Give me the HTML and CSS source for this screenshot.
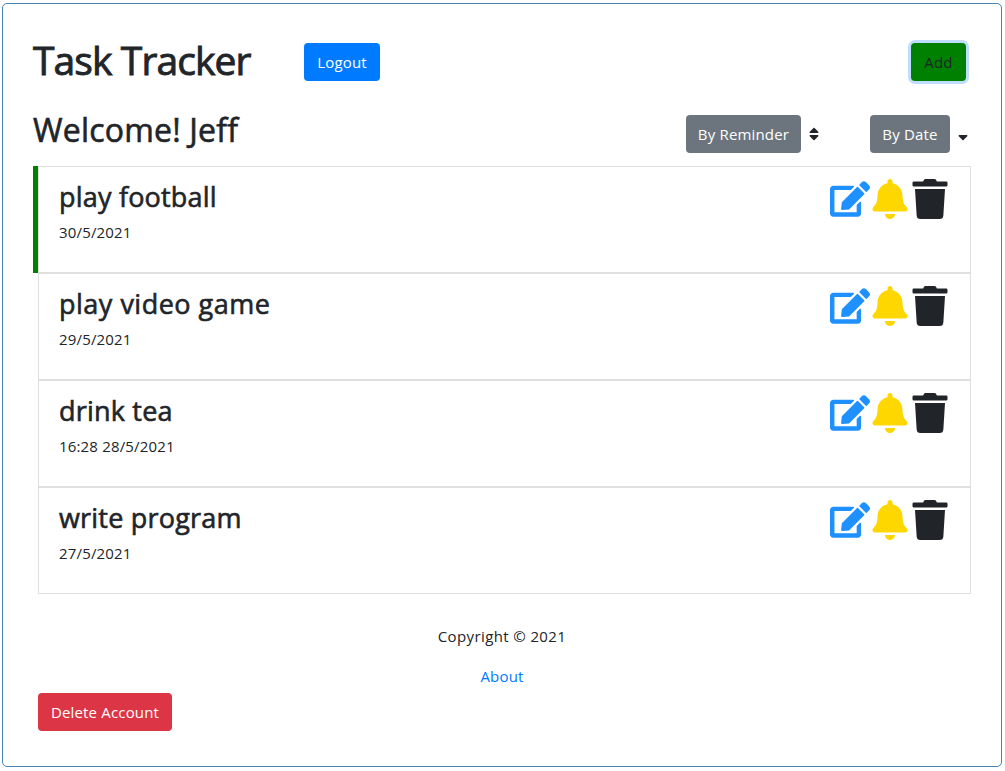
FILE: index.html
```
<!DOCTYPE html>
<html lang="en">
<head>
<meta charset="utf-8">
<title>Task Tracker</title>
<link rel="stylesheet" href="styles.css">
</head>
<body>
<svg class="sprite" aria-hidden="true">
  <symbol id="edit" viewBox="0 0 576 512"><path d="M402.6 83.2l90.2 90.2c3.8 3.8 3.8 10 0 13.8L274.4 405.6l-92.8 10.3c-12.4 1.4-22.9-9.1-21.5-21.5l10.3-92.8L388.8 83.2c3.8-3.8 10-3.8 13.8 0zm162-22.9l-48.8-48.8c-15.2-15.2-39.9-15.2-55.2 0l-35.4 35.4c-3.8 3.8-3.8 10 0 13.8l90.2 90.2c3.8 3.8 10 3.8 13.8 0l35.4-35.4c15.2-15.3 15.2-40 0-55.2zM384 346.2V448H64V128h229.8c3.2 0 6.200-1.300 8.500-3.500l40-40c7.600-7.600 2.200-20.500-8.500-20.500H48C21.500 64 0 85.500 0 112v352c0 26.500 21.500 48 48 48h352c26.500 0 48-21.500 48-48V306.200c0-10.700-12.900-16-20.500-8.500l-40 40c-2.200 2.300-3.500 5.300-3.500 8.500z"/></symbol>
  <symbol id="bell" viewBox="0 0 448 512"><path d="M224 512c35.320 0 63.970-28.650 63.970-64H160.030c0 35.350 28.650 64 63.970 64zm215.390-149.710c-19.320-20.760-55.470-51.990-55.470-154.290 0-77.700-54.480-139.900-127.940-155.160V32c0-17.670-14.320-32-31.980-32s-31.980 14.330-31.980 32v20.840C118.560 68.100 64.080 130.300 64.080 208c0 102.300-36.150 133.530-55.470 154.290-6 6.450-8.660 14.160-8.610 21.710.11 16.400 12.980 32 32.100 32h383.800c19.120 0 32-15.600 32.100-32 .05-7.550-2.610-15.270-8.610-21.710z"/></symbol>
  <symbol id="trash" viewBox="0 0 448 512"><path d="M432 32H312l-9.400-18.700A24 24 0 0 0 281.100 0H166.800a23.720 23.720 0 0 0-21.400 13.300L136 32H16A16 16 0 0 0 0 48v32a16 16 0 0 0 16 16h416a16 16 0 0 0 16-16V48a16 16 0 0 0-16-16zM53.200 467a48 48 0 0 0 47.900 45h245.800a48 48 0 0 0 47.900-45L416 128H32z"/></symbol>
  <symbol id="sort" viewBox="0 0 320 512"><path d="M41 288h238c21.400 0 32.100 25.900 17 41L177 448c-9.400 9.400-24.600 9.400-33.900 0L24 329c-15.100-15.100-4.400-41 17-41zm255-105L177 64c-9.400-9.400-24.600-9.400-33.900 0L24 183c-15.100 15.100-4.400 41 17 41h238c21.400 0 32.100-25.900 17-41z"/></symbol>
  <symbol id="sort-down" viewBox="0 0 320 512"><path d="M41 288h238c21.400 0 32.100 25.900 17 41L177 448c-9.400 9.400-24.600 9.400-33.900 0L24 329c-15.100-15.100-4.400-41 17-41z"/></symbol>
</svg>
<main class="container">
  <header class="header">
    <h1 class="title">Task Tracker</h1>
    <button class="btn btn-primary">Logout</button>
    <button class="btn btn-add">Add</button>
  </header>
  <section class="toolbar">
    <h2 class="welcome">Welcome! Jeff</h2>
    <button class="btn btn-secondary btn-reminder">By Reminder</button>
    <svg class="sort-icon"><use href="#sort"/></svg>
    <button class="btn btn-secondary btn-date">By Date</button>
    <svg class="sort-icon"><use href="#sort-down"/></svg>
  </section>
  <ul class="tasks">
    <li class="task reminder">
      <div class="card"><div><h3 class="name">play football</h3><p class="date">30/5/2021</p></div>
      <div class="actions"><svg class="icon edit"><use href="#edit"/></svg><svg class="icon bell"><use href="#bell"/></svg><svg class="icon"><use href="#trash"/></svg></div></div>
    </li>
    <li class="task">
      <div class="card"><div><h3 class="name name-wide">play video game</h3><p class="date">29/5/2021</p></div>
      <div class="actions"><svg class="icon edit"><use href="#edit"/></svg><svg class="icon bell"><use href="#bell"/></svg><svg class="icon"><use href="#trash"/></svg></div></div>
    </li>
    <li class="task">
      <div class="card"><div><h3 class="name">drink tea</h3><p class="date">16:28 28/5/2021</p></div>
      <div class="actions"><svg class="icon edit"><use href="#edit"/></svg><svg class="icon bell"><use href="#bell"/></svg><svg class="icon"><use href="#trash"/></svg></div></div>
    </li>
    <li class="task">
      <div class="card"><div><h3 class="name">write program</h3><p class="date">27/5/2021</p></div>
      <div class="actions"><svg class="icon edit"><use href="#edit"/></svg><svg class="icon bell"><use href="#bell"/></svg><svg class="icon"><use href="#trash"/></svg></div></div>
    </li>
  </ul>
  <footer class="footer">
    <p class="copyright">Copyright © 2021</p>
    <a class="about" href="#">About</a>
  </footer>
  <button class="btn btn-danger">Delete Account</button>
</main>
</body>
</html>
```
FILE: styles.css
```
* { box-sizing: border-box; }
body {
  margin: 0;
  padding: 3px 3px 0 2px;
  background: #fff;
  color: #212529;
  font: 400 15px/24px "Open Sans", "Noto Sans", sans-serif;
  letter-spacing: 0.17px;
  white-space: nowrap;
}
h1, h2, h3, p, ul { margin: 0; padding: 0; }
h1, h2, h3 { font-weight: 500; -webkit-text-stroke: 0.6px #212529; }
.sprite { display: none; }
.container {
  width: 1000px;
  height: 764px;
  padding: 30px;
  border: 1px solid steelblue;
  border-radius: 5px;
}
.header { display: flex; height: 62px; padding: 9px 5px 0 0; }
.title {
  width: 271px;
  font-size: 39px;
  line-height: 33px;
  letter-spacing: -0.9px;
  -webkit-text-stroke-width: 0.9px;
}
.btn {
  display: flex;
  flex-shrink: 0;
  align-items: center;
  justify-content: center;
  height: 38px;
  padding: 0;
  border: 0;
  border-radius: 4px;
  color: #fff;
  font: inherit;
  letter-spacing: inherit;
}
.btn-primary { width: 76px; background: #007bff; }
.btn-add {
  width: 55px;
  margin-left: auto;
  background: green;
  color: #212529;
  box-shadow: 0 0 0 3px #bfdeff;
}
.toolbar { display: flex; height: 70px; padding-top: 19px; }
.welcome {
  width: 653px;
  font-size: 32px;
  line-height: 30px;
  letter-spacing: 0.2px;
}
.btn-secondary { background: #6c757d; }
.btn-reminder { width: 115px; }
.btn-date { width: 80px; margin-left: 48px; }
.sort-icon { flex-shrink: 0; width: 16px; height: 16px; margin: 11px 0 0 5px; fill: #212529; }
.tasks { list-style: none; }
.task { border-left: 5px solid transparent; }
.reminder { border-left-color: green; }
.card {
  display: flex;
  justify-content: space-between;
  height: 107px;
  padding: 12px 20px 0;
  border: 1px solid #dfdfdf;
}
.name { font-size: 27px; line-height: 36px; letter-spacing: 0.2px; }
.name-wide { letter-spacing: 0.5px; }
.date { margin-top: 5px; }
.actions { display: flex; }
.icon { width: 40px; height: 40px; fill: #212529; }
.edit { fill: dodgerblue; }
.bell { fill: gold; }
.footer {
  display: flex;
  flex-direction: column;
  align-items: center;
  gap: 16px;
  padding-top: 30px;
}
.copyright { letter-spacing: 0.38px; }
.about { color: #007bff; text-decoration: none; }
.btn-danger { width: 134px; margin: 5px 0 0 5px; background: #dc3545; }
```
